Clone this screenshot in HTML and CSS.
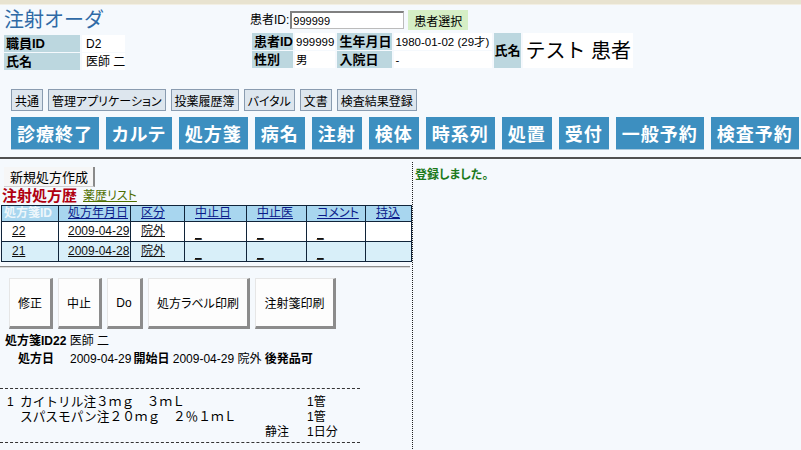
FILE: index.html
```html
<!DOCTYPE html>
<html lang="ja">
<head>
<meta charset="utf-8">
<title>注射オーダ</title>
<link rel="stylesheet" href="styles.css">
</head>
<body>
<div class="topbar"></div>
<header class="head">
  <div class="head-left">
    <h1 class="title">注射オーダ</h1>
    <table class="info">
      <tr><th>職員ID</th><td class="v1">D2</td></tr>
      <tr><th>氏名</th><td class="v1">医師 二</td></tr>
    </table>
  </div>
  <div class="head-right">
    <div class="search">
      <label class="search-label">患者ID:<input class="search-input" type="text" value="999999"></label>
      <button class="select-btn">患者選択</button>
    </div>
    <table class="patient">
      <tr>
        <th class="pl1">患者ID</th><td class="pv1">999999</td>
        <th class="pl2">生年月日</th><td class="pv2">1980-01-02 (29才)</td>
        <th class="pl3" rowspan="2">氏名</th><td class="pname" rowspan="2">テスト 患者</td>
      </tr>
      <tr>
        <th class="pl1">性別</th><td class="pv1">男</td>
        <th class="pl2">入院日</th><td class="pv2">-</td>
      </tr>
    </table>
  </div>
</header>
<nav class="tabs">
  <button class="tab">共通</button>
  <button class="tab">管理アプリケーション</button>
  <button class="tab">投薬履歴簿</button>
  <button class="tab">バイタル</button>
  <button class="tab">文書</button>
  <button class="tab">検査結果登録</button>
</nav>
<nav class="bigs">
  <button class="big">診療終了</button>
  <button class="big">カルテ</button>
  <button class="big">処方箋</button>
  <button class="big">病名</button>
  <button class="big">注射</button>
  <button class="big">検体</button>
  <button class="big">時系列</button>
  <button class="big">処置</button>
  <button class="big">受付</button>
  <button class="big">一般予約</button>
  <button class="big">検査予約</button>
</nav>
<main class="split">
  <section class="pane-left">
    <button class="new-btn">新規処方作成</button>
    <div class="hist-head"><span class="hist-title">注射処方歴</span><a class="hist-link" href="#">薬歴リスト</a></div>
    <table class="hist">
      <tr class="hrow">
        <th class="c1 first">処方箋ID</th>
        <th class="c2"><a href="#">処方年月日</a></th>
        <th class="c3"><a href="#">区分</a></th>
        <th class="c4"><a href="#">中止日</a></th>
        <th class="c5"><a href="#">中止医</a></th>
        <th class="c6"><a href="#">コメント</a></th>
        <th class="c7"><a href="#">持込</a></th>
      </tr>
      <tr class="r-odd">
        <td class="id"><a href="#">22</a></td><td class="date"><a href="#">2009-04-29</a></td><td><a href="#">院外</a></td>
        <td class="low"><a href="#">_</a></td><td class="low"><a href="#">_</a></td><td class="low"><a href="#">_</a></td><td></td>
      </tr>
      <tr class="r-even">
        <td class="id"><a href="#">21</a></td><td class="date"><a href="#">2009-04-28</a></td><td><a href="#">院外</a></td>
        <td class="low"><a href="#">_</a></td><td class="low"><a href="#">_</a></td><td class="low"><a href="#">_</a></td><td></td>
      </tr>
    </table>
    <div class="rule"></div>
    <div class="actions">
      <button class="act w1">修正</button>
      <button class="act w1">中止</button>
      <button class="act w2">Do</button>
      <button class="act w3">処方ラベル印刷</button>
      <button class="act w4">注射箋印刷</button>
    </div>
    <div class="rx-head"><b>処方箋ID22</b> 医師 二</div>
    <div class="rx-meta"><b>処方日</b><span class="d1">2009-04-29</span><b>開始日</b> 2009-04-29 院外 <b>後発品可</b></div>
    <div class="rx-body">
      <div class="med">
        <span class="no">1</span><span class="name">カイトリル注３ｍｇ　３ｍＬ</span><span class="qty">1管</span>
        <span class="no"></span><span class="name">スパスモパン注２０ｍｇ　２％１ｍＬ</span><span class="qty">1管</span>
        <span class="no"></span><span class="name route">静注</span><span class="qty">1日分</span>
      </div>
    </div>
  </section>
  <section class="pane-right">
    <p class="msg">登録しました。</p>
  </section>
</main>
</body>
</html>
```
FILE: styles.css
```css
* { box-sizing: border-box; }
html, body { margin: 0; padding: 0; }
body {
  background: #f5f9fd;
  font-family: "Liberation Sans", "Noto Sans CJK JP", sans-serif;
  font-size: 12px;
  line-height: 16px;
  color: #000;
  font-feature-settings: "palt";
  width: 801px;
  height: 450px;
  overflow: hidden;
}
button { font-family: inherit; font-feature-settings: "palt"; cursor: pointer; }
th, td { white-space: nowrap; }

.topbar {
  height: 5px;
  background: #e8e3d0;
  border-bottom: 1px solid #f2efe4;
}

.head {
  display: flex;
  padding: 2px 0 0 4px;
  height: 84px;
}
.head-left { width: 246px; }
.title {
  margin: 0;
  font-size: 20px;
  line-height: 26px;
  font-weight: normal;
  color: #2f6aa6;
  font-feature-settings: normal;
}
.info { border-collapse: separate; border-spacing: 0 1px; margin-top: 1px; }
.info th {
  background: #bcd7df;
  width: 76px;
  text-align: left;
  font-size: 13px;
  font-weight: bold;
  padding: 0 0 0 2px;
  height: 17px;
}
.info td.v1 {
  background: #fff;
  width: 42px;
  padding: 0 0 0 4px;
  border-left: 2px solid #f5f9fd;
}

.head-right { padding-top: 3px; }
.search { display: flex; align-items: center; gap: 4px; height: 20px; }
.search-label { display: flex; align-items: center; font-size: 12px; }
.search-input {
  width: 114px;
  height: 18px;
  margin-left: 1px;
  padding: 0 1px;
  font-family: "Liberation Sans", sans-serif;
  font-size: 11px;
  border: 1px solid #bbb;
  border-top: 2px solid #808080;
  border-left: 2px solid #808080;
  background: #fff;
}
.select-btn {
  background: #d6efc6;
  border: none;
  height: 20px;
  padding: 0 6px;
  font-size: 12px;
  color: #000;
}
.patient { border-collapse: separate; border-spacing: 2px 1px; margin-top: 2px; }
.patient th {
  background: #bcd7df;
  font-weight: bold;
  font-size: 13px;
  text-align: left;
  padding: 0 0 0 2px;
  height: 17px;
}
.patient td { background: #fff; padding: 0 1px; font-size: 11.5px; }
.pl1 { width: 41px; }
.pv1 { width: 36px; }
.pl2 { width: 55px; }
.pv2 { width: 98px; }
.pl3 { width: 27px; padding: 0 !important; }
.patient td.pname { font-size: 20px; width: 92px; padding: 0 2px; font-feature-settings: normal; }

.tabs { display: flex; gap: 5px; padding-left: 11px; height: 28px; align-items: flex-start; }
.tab {
  height: 22px;
  background: #dde6ee;
  border: 1px solid #8a9cb0;
  padding: 0 3px;
  font-size: 12px;
  color: #000;
}
.bigs { display: flex; gap: 7px; padding-left: 11px; height: 39px; align-items: flex-start; }
.big {
  height: 33px;
  background: #3d8fc0;
  border: none;
  border-bottom: 1px solid #a9c9dd;
  color: #fff;
  font-size: 18px;
  font-weight: bold;
  padding: 0 6px;
  letter-spacing: 1px;
}

.split {
  display: flex;
  border-top: 2px solid #505050;
  margin-top: 1px;
  height: 300px;
}
.pane-left { width: 412px; padding-top: 8px; }
.pane-right {
  flex: 1;
  border-left: 1px dotted #222;
  margin-top: 3px;
  padding: 5px 0 0 2px;
}
.msg { margin: 0; color: #1c7a1c; font-weight: bold; font-size: 12px; }

.new-btn {
  margin-left: 4px;
  height: 20px;
  width: 91px;
  background: #f6f6f6;
  border: none;
  border-right: 2px solid #8a8a8a;
  border-bottom: 1px solid #d0d0d0;
  font-size: 13px;
  padding: 0 0 0 6px;
  text-align: left;
  color: #000;
  display: block;
}
.hist-head { padding-left: 2px; height: 17px; display: flex; align-items: flex-end; gap: 6px; }
.hist-title { color: #b00010; font-weight: bold; font-size: 15px; line-height: 17px; }
.hist-link { color: #4e6e00; font-size: 12px; line-height: 15px; }

.hist {
  border-collapse: collapse;
  margin: 1px 0 0 1px;
  width: 410px;
  table-layout: fixed;
  border: 1px solid #10243a;
}
.hist th, .hist td {
  border: 1px solid #10243a;
  height: 20px;
  padding: 0 0 0 10px;
  text-align: left;
  font-weight: normal;
  font-size: 12px;
  line-height: 15px;
  overflow: hidden;
}
.hist td.date, .hist th.c2 { padding-left: 9px; }
.hrow { background: #a8d6ef; }
.hrow th { height: 16px; }
.hrow a { color: #0a1a8a; }
.hrow .first { color: #eef6fb; font-weight: bold; padding-left: 2px; }
.hist td a { color: #111; }
.hist td.low { vertical-align: bottom; }
.r-odd { background: #fff; }
.r-even { background: #d8eff9; }
.c1 { width: 57px; } .c2 { width: 72px; } .c3 { width: 54px; }
.c4 { width: 62px; } .c5 { width: 60px; } .c6 { width: 59px; } .c7 { width: 46px; }

.rule { margin-top: 4px; height: 2px; background: #8c8c8c; border-bottom: 1px solid #d8d8d8; width: 410px; }

.actions { display: flex; gap: 5px; padding: 10px 0 0 9px; height: 65px; }
.act {
  height: 51px;
  background: #fdfdfd;
  border: none;
  border-left: 1px solid #e6e6e6;
  border-top: 1px solid #e6e6e6;
  border-right: 3px solid #8c8c8c;
  border-bottom: 3px solid #8c8c8c;
  font-size: 12px;
  color: #000;
  padding: 0;
}
.w1 { width: 44px; } .w2 { width: 36px; } .w3 { width: 102px; } .w4 { width: 81px; }

.rx-head { padding-left: 5px; height: 18px; }
.rx-meta { padding-left: 18px; height: 20px; }
.rx-meta .d1 { margin: 0 2px 0 16px; }
.rx-body {
  margin-top: 17px;
  width: 360px;
  border-top: 1px dashed #333;
  border-bottom: 1px dashed #333;
  padding: 6px 0 2px;
}
.med {
  display: grid;
  grid-template-columns: 20px 287px auto;
  line-height: 15px;
  font-feature-settings: normal;
}
.med .name { font-size: 12.7px; }
.med .no { padding-left: 7px; }
.med .route { text-align: right; padding-right: 18px; font-size: 12px; }
```
